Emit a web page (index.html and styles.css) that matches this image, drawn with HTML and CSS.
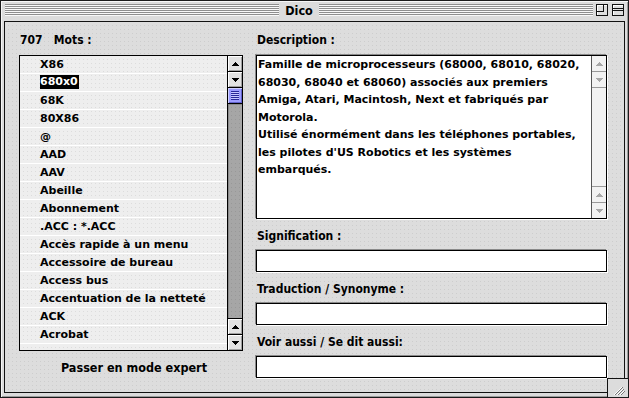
FILE: index.html
```html
<!DOCTYPE html>
<html lang="fr">
<head>
<meta charset="utf-8">
<title>Dico</title>
<link rel="stylesheet" href="styles.css">
</head>
<body>
<div class="window">
  <div class="titlebar">
    <div class="stripes"></div>
    <div class="title">Dico</div>
    <div class="stripes"></div>
    <div class="tb-buttons">
      <span class="tb-btn">
        <svg width="12" height="12" viewBox="0 0 12 12" shape-rendering="crispEdges">
          <rect x="0.5" y="0.5" width="11" height="11" fill="#dedede" stroke="#111"/>
          <path d="M1.5 10.5V1.5H10.5" fill="none" stroke="#fff"/>
          <path d="M7.5 0.5V7.5H0.5" fill="none" stroke="#111"/>
        </svg>
      </span>
      <span class="tb-btn">
        <svg width="12" height="12" viewBox="0 0 12 12" shape-rendering="crispEdges">
          <rect x="0.5" y="0.5" width="11" height="11" fill="#dedede" stroke="#111"/>
          <path d="M1.5 10.5V1.5H10.5" fill="none" stroke="#fff"/>
          <path d="M0.5 4.5H11.5M0.5 6.5H11.5" fill="none" stroke="#111"/>
        </svg>
      </span>
    </div>
  </div>

  <div class="content">
    <div class="col">
      <div class="label">707&nbsp;&nbsp; Mots :</div>
      <div class="listbox">
        <ul class="rows">
          <li>X86</li>
          <li><span class="sel">680x0</span></li>
          <li>68K</li>
          <li>80X86</li>
          <li>@</li>
          <li>AAD</li>
          <li>AAV</li>
          <li>Abeille</li>
          <li>Abonnement</li>
          <li>.ACC : *.ACC</li>
          <li>Accès rapide à un menu</li>
          <li>Accessoire de bureau</li>
          <li>Access bus</li>
          <li>Accentuation de la netteté</li>
          <li>ACK</li>
          <li>Acrobat</li>
          <li class="partial"></li>
        </ul>
        <div class="vscroll">
          <div class="arrow"><svg width="7" height="4" viewBox="0 0 7 4" shape-rendering="crispEdges"><path d="M3 0h1v1h1v1h1v1h1v1H0V3h1V2h1V1h1z"/></svg></div>
          <div class="arrow"><svg width="7" height="4" viewBox="0 0 7 4" shape-rendering="crispEdges"><path d="M0 0h7v1H6v1H5v1H4v1H3V3H2V2H1V1H0z"/></svg></div>
          <div class="thumb"><span class="grip"></span></div>
          <div class="track"></div>
          <div class="arrow"><svg width="7" height="4" viewBox="0 0 7 4" shape-rendering="crispEdges"><path d="M3 0h1v1h1v1h1v1h1v1H0V3h1V2h1V1h1z"/></svg></div>
          <div class="arrow last"><svg width="7" height="4" viewBox="0 0 7 4" shape-rendering="crispEdges"><path d="M0 0h7v1H6v1H5v1H4v1H3V3H2V2H1V1H0z"/></svg></div>
        </div>
      </div>
      <div class="expert">Passer en mode expert</div>
    </div>

    <div class="col">
      <div class="label">Description :</div>
      <div class="desc">
        <div class="desc-text">Famille de microprocesseurs (68000, 68010, 68020,<br>68030, 68040 et 68060) associés aux premiers<br>Amiga, Atari, Macintosh, Next et fabriqués par<br>Motorola.<br>Utilisé énormément dans les téléphones portables,<br>les pilotes d'US Robotics et les systèmes<br>embarqués.</div>
        <div class="vscroll inactive">
          <div class="arrow"><svg width="7" height="4" viewBox="0 0 7 4" shape-rendering="crispEdges"><path d="M3 0h1v1h1v1h1v1h1v1H0V3h1V2h1V1h1z"/></svg></div>
          <div class="arrow"><svg width="7" height="4" viewBox="0 0 7 4" shape-rendering="crispEdges"><path d="M0 0h7v1H6v1H5v1H4v1H3V3H2V2H1V1H0z"/></svg></div>
          <div class="track"></div>
          <div class="arrow"><svg width="7" height="4" viewBox="0 0 7 4" shape-rendering="crispEdges"><path d="M3 0h1v1h1v1h1v1h1v1H0V3h1V2h1V1h1z"/></svg></div>
          <div class="arrow last"><svg width="7" height="4" viewBox="0 0 7 4" shape-rendering="crispEdges"><path d="M0 0h7v1H6v1H5v1H4v1H3V3H2V2H1V1H0z"/></svg></div>
        </div>
      </div>
      <div class="label field-label">Signification :</div>
      <div class="field"></div>
      <div class="label field-label">Traduction / Synonyme :</div>
      <div class="field"></div>
      <div class="label field-label">Voir aussi / Se dit aussi:</div>
      <div class="field"></div>
    </div>
  </div>

  <div class="grow">
    <svg width="21" height="19" viewBox="0 0 21 19" shape-rendering="crispEdges">
      <path d="M6 16l8-8M9 16l6-6M12 16l4-4" stroke="#fff" stroke-width="1" fill="none" shape-rendering="auto"/>
      <path d="M7 16l8-8M10 16l6-6M13 16l4-4" stroke="#777" stroke-width="1" fill="none" shape-rendering="auto"/>
    </svg>
  </div>
</div>
</body>
</html>
```

FILE: styles.css
```css
* { box-sizing: border-box; }

html, body {
  margin: 0;
  padding: 0;
}

body {
  width: 629px;
  height: 398px;
  overflow: hidden;
  background: #ffffff;
  font-family: "DejaVu Sans", "Liberation Sans", sans-serif;
  color: #000;
}

.window {
  position: relative;
  width: 629px;
  height: 398px;
  border: 1px solid #1a1a1a;
  background: #dcdcdc;
  box-shadow: inset 1px 1px 0 #f6f6f6, inset -1px -1px 0 #9a9a9a;
  display: flex;
  flex-direction: column;
}

/* ---------- title bar ---------- */
.titlebar {
  height: 20px;
  flex: none;
  display: flex;
  align-items: flex-start;
  padding: 0 4px;
}

.stripes {
  flex: 1;
  height: 12px;
  margin-top: 3px;
  background: repeating-linear-gradient(to bottom, #8e8e8e 0 1px, #f8f8f8 1px 2px);
}

.title {
  padding: 0 6px;
  font-family: "DejaVu Sans Condensed", "DejaVu Sans", sans-serif;
  font-stretch: condensed;
  font-weight: bold;
  font-size: 12.5px;
  line-height: 19px;
}

.tb-buttons {
  display: flex;
  gap: 4px;
  margin-left: 3px;
  margin-top: 3px;
}

.tb-btn {
  display: block;
  width: 12px;
  height: 12px;
}

.tb-btn svg { display: block; }

/* ---------- content ---------- */
.content {
  flex: 1;
  margin: 0 3px 4px 3px;
  border: 1px solid #111;
  background-color: #dddddd;
  background-image:
    linear-gradient(90deg, #dddddd 3px, transparent 3px),
    linear-gradient(#dddddd 3px, #cdcdcd 3px);
  background-size: 4px 4px, 4px 4px;
  display: grid;
  grid-template-columns: 224px 351px;
  column-gap: 13px;
  align-items: start;
  padding: 10px 17px 0 14px;
}

.col {
  display: flex;
  flex-direction: column;
}

.label {
  height: 16px;
  line-height: 16px;
  margin-bottom: 7px;
  font-family: "DejaVu Sans Condensed", "DejaVu Sans", sans-serif;
  font-stretch: condensed;
  font-weight: bold;
  font-size: 12px;
  white-space: nowrap;
  padding-left: 1px;
}

.field-label {
  margin-top: 9px;
  margin-bottom: 6px;
}

/* ---------- list ---------- */
.listbox {
  height: 296px;
  border: 1px solid #000;
  display: flex;
  background-color: #eeeeee;
  background-image:
    linear-gradient(90deg, #eeeeee 3px, transparent 3px),
    linear-gradient(#eeeeee 3px, #dcdcdc 3px);
  background-size: 4px 4px, 4px 4px;
}

.rows {
  flex: 1;
  list-style: none;
  margin: 0;
  padding: 0;
  overflow: hidden;
}

.rows li {
  height: 18px;
  border-bottom: 1px solid #ffffff;
  line-height: 17px;
  padding-left: 20px;
  font-weight: bold;
  font-size: 11px;
  white-space: nowrap;
}

.sel {
  display: inline-block;
  background: #000;
  color: #fff;
  line-height: 14px;
  padding-right: 1px;
  vertical-align: 1px;
}

/* ---------- scrollbars ---------- */
.vscroll {
  width: 15px;
  flex: none;
  border-left: 1px solid #000;
  display: flex;
  flex-direction: column;
}

.arrow {
  height: 16px;
  flex: none;
  border-bottom: 1px solid #000;
  background: #e2e2e2;
  box-shadow: inset 1px 1px 0 #ffffff, inset -1px -1px 0 #a0a0a0;
  display: flex;
  align-items: center;
  justify-content: center;
}

.arrow.last {
  border-bottom: none;
  height: 15px;
}

.arrow svg { display: block; fill: #000; }

.thumb {
  height: 16px;
  flex: none;
  border-bottom: 1px solid #000;
  background: #9c9cff;
  box-shadow: inset 1px 1px 0 #d0d0ff, inset -1px -1px 0 #6262cc;
  display: flex;
  align-items: center;
  justify-content: center;
}

.grip {
  display: block;
  width: 8px;
  height: 9px;
  background: repeating-linear-gradient(to bottom, #2a2a9a 0 1px, #c8c8ff 1px 2px);
}

.track {
  flex: 1;
  border-bottom: 1px solid #000;
  background-color: #a6a6a6;
  background-image:
    linear-gradient(90deg, #a6a6a6 3px, transparent 3px),
    linear-gradient(#a6a6a6 3px, #989898 3px);
  background-size: 4px 4px, 4px 4px;
  box-shadow: inset 1px 1px 0 #8a8a8a;
}

.vscroll.inactive {
  border-left-color: #555;
  background: #f2f2f2;
}

.vscroll.inactive .arrow {
  background: #f2f2f2;
  box-shadow: none;
  border-bottom-color: #999;
}

.vscroll.inactive .arrow.last { border-bottom: none; }

.vscroll.inactive .arrow svg { fill: #a8a8a8; }

.vscroll.inactive .track {
  background: #f2f2f2;
  box-shadow: none;
  border-bottom-color: #999;
}

/* ---------- description ---------- */
.desc {
  height: 164px;
  border: 1px solid #000;
  background: #fff;
  display: flex;
  box-shadow: -1px -1px 0 #8a8a8a, 1px 1px 0 #ffffff;
}

.desc-text {
  flex: 1;
  padding: 0 0 0 1px;
  font-weight: bold;
  font-size: 11px;
  line-height: 17.5px;
  white-space: nowrap;
  overflow: hidden;
}

.field {
  height: 22px;
  border: 1px solid #000;
  background: #fff;
  box-shadow: -1px -1px 0 #8a8a8a, 1px 1px 0 #ffffff;
}

.expert {
  margin-top: 9px;
  height: 16px;
  line-height: 16px;
  text-align: center;
  padding-left: 6px;
  font-family: "DejaVu Sans Condensed", "DejaVu Sans", sans-serif;
  font-stretch: condensed;
  font-weight: bold;
  font-size: 12.5px;
  white-space: nowrap;
}

/* ---------- grow box (overlaps frame corner) ---------- */
.grow {
  position: absolute;
  right: 0;
  bottom: 0;
  width: 21px;
  height: 19px;
  border-left: 1px solid #111;
  border-top: 1px solid #111;
  background: #dcdcdc;
}

.grow svg { display: block; }
```
